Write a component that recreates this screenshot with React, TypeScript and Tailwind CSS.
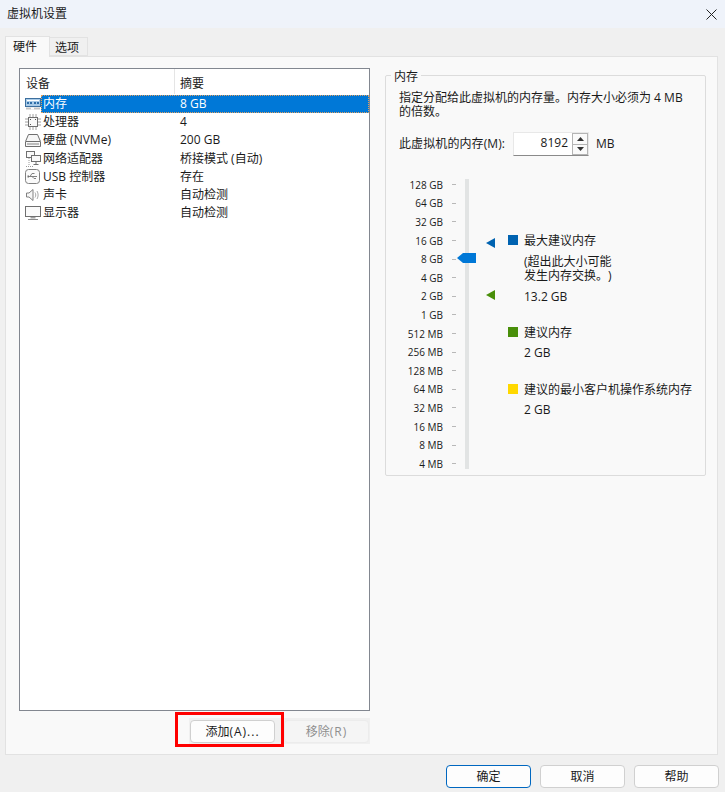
import React from "react";

const Mem = () => (
  <svg width="16" height="13" viewBox="0 0 16 13" fill="none">
    <rect x="0.5" y="0.5" width="15" height="8" fill="#a9cbe8" stroke="#3d6f9e" />
    <path d="M2 2.500h12" stroke="#ffffff" />
    <path d="M2 5h2M5 5h2M9 5h2M12 5h2" stroke="#2f6ea8" strokeWidth="2" />
    <path d="M1 9.500h14v2H1z" fill="#c4c4c4" />
    <path d="M6 9.500h3v2H6z" fill="#ffffff" />
  </svg>
);
const Cpu = () => (
  <svg width="16" height="16" viewBox="0 0 16 16" fill="none">
    <rect x="3.500" y="3.500" width="9" height="9" fill="#f7f7f7" stroke="#6e6e6e" />
    <path d="M5 0v3M8 0v3M11 0v3M5 13v3M8 13v3M11 13v3M0 5h3M0 8h3M0 11h3M13 5h3M13 8h3M13 11h3" stroke="#a0a0a0" />
    <path d="M5 5h1v1H5zM10 5h1v1h-1zM5 10h1v1H5z" fill="#555" />
  </svg>
);
const Disk = () => (
  <svg width="16" height="13" viewBox="0 0 16 13" fill="none">
    <path d="M3.500 0.500h9l3 7v5H0.500v-5z" fill="#f7f7f7" stroke="#6f6f6f" />
    <path d="M1 7.500h14" stroke="#6f6f6f" />
    <path d="M2 10h12" stroke="#bdbdbd" strokeWidth="2" />
  </svg>
);
const Net = () => (
  <svg width="16" height="16" viewBox="0 0 16 16" fill="none">
    <rect x="1.500" y="0.500" width="8" height="6" fill="#fafafa" stroke="#707070" />
    <rect x="6.500" y="4.500" width="9" height="6" fill="#fafafa" stroke="#707070" />
    <path d="M11 11v2M8.500 13.500h5" stroke="#707070" />
    <path d="M4 7v8M1 15.500h7" stroke="#9a9a9a" strokeDasharray="1 1" />
  </svg>
);
const Usb = () => (
  <svg width="15" height="15" viewBox="0 0 15 15" fill="none">
    <rect x="0.500" y="0.500" width="14" height="14" rx="3" fill="#fafafa" stroke="#808080" />
    <path d="M3 7.500h9M5 7.500l2-3h2.500M7 7.500l2 2h2" stroke="#808080" />
    <path d="M2.500 6.500h1.500v2H2.500z" fill="#707070" />
  </svg>
);
const Sound = () => (
  <svg width="13" height="14" viewBox="0 0 13 14" fill="none" className="ml-[1px]">
    <path d="M0.500 5h2.500l4-3.500v11l-4-3.500H0.500z" fill="#f7f7f7" stroke="#808080" />
    <path d="M9 4.500c1 1.500 1 3.500 0 5M11 3c1.500 2.500 1.500 5.500 0 8" stroke="#a8a8a8" />
  </svg>
);
const Monitor = () => (
  <svg width="16" height="15" viewBox="0 0 16 15" fill="none">
    <rect x="0.500" y="0.500" width="15" height="10" fill="#fafafa" stroke="#6f6f6f" />
    <path d="M5.500 11h5v1.500h-5z" fill="#a0a0a0" />
    <path d="M3 13.500h10" stroke="#8a8a8a" />
  </svg>
);

const rows: [React.ReactNode, string, string][] = [
  [<Mem />, "内存", "8 GB"],
  [<Cpu />, "处理器", "4"],
  [<Disk />, "硬盘 (NVMe)", "200 GB"],
  [<Net />, "网络适配器", "桥接模式 (自动)"],
  [<Usb />, "USB 控制器", "存在"],
  [<Sound />, "声卡", "自动检测"],
  [<Monitor />, "显示器", "自动检测"],
];

const ticks = [
  "128 GB", "64 GB", "32 GB", "16 GB", "8 GB", "4 GB", "2 GB", "1 GB",
  "512 MB", "256 MB", "128 MB", "64 MB", "32 MB", "16 MB", "8 MB", "4 MB",
];

function Btn({ children, primary, disabled }: { children: React.ReactNode; primary?: boolean; disabled?: boolean }) {
  const border = primary ? "border-[#0067c0]" : disabled ? "border-[#ececec]" : "border-[#d0d0d0]";
  const text = disabled ? "text-[#8f8f8f] bg-[#f5f5f5]" : "text-[#1a1a1a] bg-[#fdfdfd]";
  return (
    <div className={`w-[85px] h-[23px] flex items-center justify-center rounded-[4px] border pt-[1px] whitespace-nowrap ${border} ${text}`}>
      {children}
    </div>
  );
}

export default function App() {
  return (
    <div
      className="w-[725px] h-[792px] flex flex-col bg-[#f0f0f0] text-[12px] leading-[16px] text-[#1a1a1a] overflow-hidden"
      style={{ fontFamily: '"Open Sans","Noto Sans CJK SC",sans-serif' }}
    >
      <div className="h-[28px] shrink-0 bg-[#eff3fa] flex items-center justify-between pl-[7px] pr-[8px]">
        <span className="text-[12px]">虚拟机设置</span>
        <svg width="11" height="11" viewBox="0 0 11 11" stroke="#222" fill="none">
          <path d="M0.500 0.500l10 10M10.500 0.500l-10 10" />
        </svg>
      </div>

      <div className="h-[28px] shrink-0 flex items-end pl-[5px]">
        <div className="h-[21px] w-[45px] -mb-px z-10 bg-[#f9f9f9] border border-b-0 border-[#e2e2e2] flex items-center pl-[7px] pb-[1px]">硬件</div>
        <div className="h-[19px] w-[38px] bg-[#f0f0f0] border border-l-0 border-[#e2e2e2] flex items-center pl-[5px] pt-[3px]">选项</div>
      </div>

      <div className="ml-[5px] w-[713px] h-[699px] shrink-0 bg-[#f9f9f9] border border-[#e2e2e2] flex items-start pl-[13px] pt-[11px]">
        <div className="w-[351px] flex flex-col">
          <div className="h-[643px] bg-white border border-[#828790] flex flex-col">
            <div className="h-[25px] mb-[1px] shrink-0 flex items-center text-[#222]">
              <div className="w-[155px] h-full pl-[6px] pt-[4px] flex items-center border-r border-[#e5e5e5]">设备</div>
              <div className="pl-[5px] pt-[4px]">摘要</div>
            </div>
            {rows.map(([icon, name, sum], i) => (
              <div key={name} className="h-[18.200px] flex items-center">
                <div className="w-[21px] pl-[5px] shrink-0 flex items-center justify-start">{icon}</div>
                <div
                  className={`flex flex-1 h-[18px] items-center ${
                    i === 0 ? "bg-[#0078d7] text-white outline-1 -outline-offset-1 outline-dotted outline-[#e0a060]" : ""
                  }`}
                >
                  <div className="w-[139px] pl-[2px] shrink-0">{name}</div>
                  <div>{sum}</div>
                </div>
              </div>
            ))}
          </div>
          <div className="h-[34px] flex items-center justify-end relative">
            <div className="flex items-center h-[26px] mt-[6px] w-[181px] bg-[#f0f0f0] pl-[1px] pr-[1px] gap-[9px]">
              <Btn>添加<span className="tracking-[1px]">(A)...</span></Btn>
              <Btn disabled>移除<span className="tracking-[1px]">(R)</span></Btn>
            </div>
            <div className="absolute left-[156px] top-[1px] w-[109px] h-[35px] border-[3px] border-[#ff0000]" />
          </div>
        </div>

        <div className="relative ml-[15px] mt-[7px] w-[321px] h-[401px] border border-[#dcdcdc] rounded-[2px] pl-[13px] pr-[8px] pt-[15px]">
          <div className="absolute left-[5px] -top-[7px] bg-[#f9f9f9] px-[3px]">内存</div>
          <p className="leading-[14px] whitespace-nowrap">
            指定分配给此虚拟机的内存量。内存大小必须为 4 MB
            <br />
            的倍数。
          </p>
          <div className="flex items-center mt-[13px] h-[24px]">
            <span className="w-[114px] shrink-0 tracking-[0.1px] whitespace-nowrap">此虚拟机的内存(M):</span>
            <div className="w-[76px] h-[24px] flex border border-[#e8e8e8] border-b-[#8a8a8a] bg-white">
              <div className="w-[58px] text-right pr-[4px] leading-[20px]">8192</div>
              <div className="flex-1 flex flex-col bg-[#b4b4b4] gap-[1px] p-[1px]">
                <div className="flex-1 bg-[#fafafa] flex items-center justify-center">
                  <svg width="7" height="4" viewBox="0 0 7 4"><path d="M3.500 0L7 4H0z" fill="#333" /></svg>
                </div>
                <div className="flex-1 bg-[#fafafa] flex items-center justify-center">
                  <svg width="7" height="4" viewBox="0 0 7 4"><path d="M0 0h7L3.500 4z" fill="#333" /></svg>
                </div>
              </div>
            </div>
            <span className="ml-[7px]">MB</span>
          </div>

          <div className="flex mt-[23px] items-start">
            <div className="relative w-[70px] h-[290px] shrink-0">
              <div className="flex flex-col -mt-[3.500px]">
                {ticks.map((t) => (
                  <div key={t} className="h-[18.600px] flex items-center justify-end text-[10px] pr-[13px]">
                    <span className="w-[45px] text-right mr-[9px] whitespace-nowrap">{t}</span>
                    <span className="w-[4px] h-px bg-[#b8b8b8]" />
                  </div>
                ))}
              </div>
              <div className="absolute left-[66px] top-0 w-[4px] h-[290px] bg-[#e2e4e4]" />
              <svg className="absolute left-[58px] top-[73px]" width="19" height="12" viewBox="0 0 19 12">
                <path d="M0 6L6 1h13v10H6z" fill="#0078d7" />
              </svg>
            </div>
            <div className="relative w-[39px] h-[130px] shrink-0">
              <svg className="absolute left-[17px] top-[59px]" width="9" height="10" viewBox="0 0 9 10"><path d="M9 0v10L0 5z" fill="#0063b1" /></svg>
              <svg className="absolute left-[17px] top-[111px]" width="9" height="10" viewBox="0 0 9 10"><path d="M9 0v10L0 5z" fill="#498f0a" /></svg>
            </div>
            <div className="flex flex-col pt-[54px] leading-[16px]">
              <div className="flex items-center gap-[6px] h-[16px]">
                <span className="w-[10px] h-[10px] -translate-y-[1px] bg-[#0063b1]" />
                <span>最大建议内存</span>
              </div>
              <div className="pl-[16px] mt-[6px] leading-[14px]">
                (超出此大小可能
                <br />
                发生内存交换。<span className="ml-[6px]">)</span>
              </div>
              <div className="pl-[16px] mt-[6px]">13.2 GB</div>
              <div className="flex items-center gap-[6px] h-[16px] mt-[20px]">
                <span className="w-[10px] h-[10px] -translate-y-[1px] bg-[#498f0a]" />
                <span>建议内存</span>
              </div>
              <div className="pl-[16px] mt-[4px]">2 GB</div>
              <div className="flex items-center gap-[6px] h-[16px] mt-[21px]">
                <span className="w-[10px] h-[10px] -translate-y-[1px] bg-[#ffd800]" />
                <span className="whitespace-nowrap">建议的最小客户机操作系统内存</span>
              </div>
              <div className="pl-[16px] mt-[4px]">2 GB</div>
            </div>
          </div>
        </div>
      </div>

      <div className="flex justify-end gap-[9px] pr-[6px] pt-[10px]">
        <Btn primary>确定</Btn>
        <Btn>取消</Btn>
        <Btn>帮助</Btn>
      </div>
    </div>
  );
}
